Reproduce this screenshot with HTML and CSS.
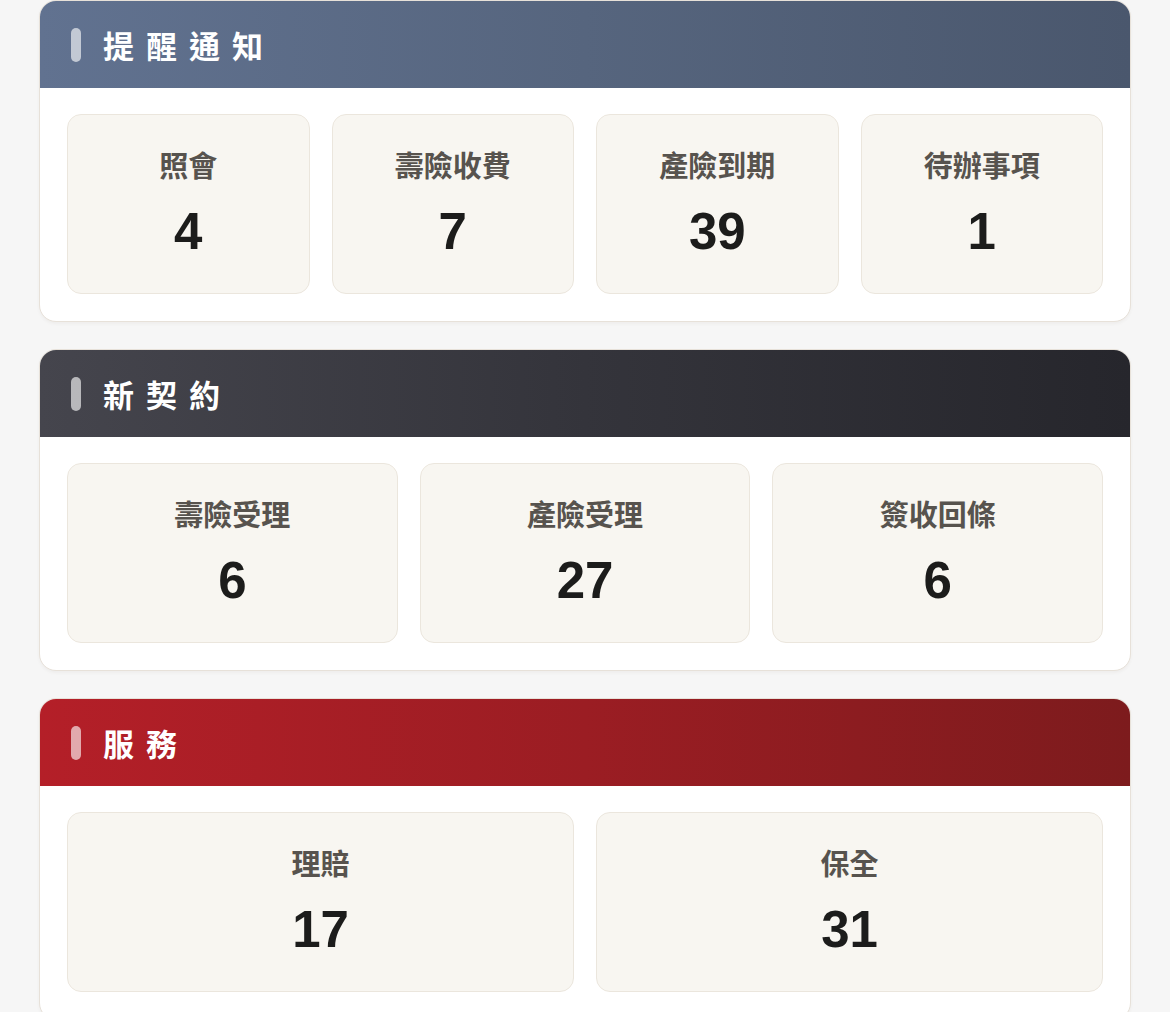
FILE: index.html
```html
<!DOCTYPE html>
<html lang="zh-Hant">
<head>
<meta charset="utf-8">
<title>Dashboard</title>
<link rel="stylesheet" href="styles.css">
</head>
<body>
<main class="page">
  <section class="card">
    <header class="card-head head-slate">
      <span class="pill"></span>
      <h2 class="card-title">提醒通知</h2>
    </header>
    <div class="tiles cols-4">
      <div class="tile"><div class="tile-label">照會</div><div class="tile-num">4</div></div>
      <div class="tile"><div class="tile-label">壽險收費</div><div class="tile-num">7</div></div>
      <div class="tile"><div class="tile-label">產險到期</div><div class="tile-num">39</div></div>
      <div class="tile"><div class="tile-label">待辦事項</div><div class="tile-num">1</div></div>
    </div>
  </section>

  <section class="card">
    <header class="card-head head-dark">
      <span class="pill"></span>
      <h2 class="card-title">新契約</h2>
    </header>
    <div class="tiles cols-3">
      <div class="tile"><div class="tile-label">壽險受理</div><div class="tile-num">6</div></div>
      <div class="tile"><div class="tile-label">產險受理</div><div class="tile-num">27</div></div>
      <div class="tile"><div class="tile-label">簽收回條</div><div class="tile-num">6</div></div>
    </div>
  </section>

  <section class="card">
    <header class="card-head head-red">
      <span class="pill"></span>
      <h2 class="card-title">服務</h2>
    </header>
    <div class="tiles cols-2">
      <div class="tile"><div class="tile-label">理賠</div><div class="tile-num">17</div></div>
      <div class="tile"><div class="tile-label">保全</div><div class="tile-num">31</div></div>
    </div>
  </section>
</main>
</body>
</html>
```

FILE: styles.css
```css
html, body {
  margin: 0;
  padding: 0;
}

body {
  background: #f6f6f6;
  font-family: "Noto Sans CJK TC", "Noto Sans", sans-serif;
}

.page {
  display: flex;
  flex-direction: column;
  gap: 27px;
  padding: 0 39px 40px 39px;
}

.card {
  background: #ffffff;
  border: 1.5px solid #e7e1d9;
  border-radius: 17px;
  overflow: hidden;
  box-shadow: 0 2px 3px rgba(120, 100, 80, 0.06);
}

.card-head {
  height: 87px;
  display: flex;
  align-items: center;
  padding-left: 31px;
  box-sizing: border-box;
}

.head-slate {
  background: linear-gradient(90deg, #617290 0%, #56657e 50%, #4a576d 100%);
}

.head-dark {
  background: linear-gradient(90deg, #45454d 0%, #34343b 50%, #26262c 100%);
}

.head-red {
  background: linear-gradient(90deg, #b41f28 0%, #9b1d23 50%, #7d1b1d 100%);
}

.pill {
  width: 10px;
  height: 34px;
  border-radius: 5px;
  background: rgba(255, 255, 255, 0.62);
  margin-right: 22px;
  flex: none;
}

.card-title {
  margin: 0;
  color: #ffffff;
  font-size: 31px;
  font-weight: 700;
  letter-spacing: 12px;
  line-height: 1;
}

.tiles {
  display: grid;
  gap: 22px;
  padding: 26px 27px 27px 27px;
}

.cols-4 { grid-template-columns: repeat(4, 1fr); }
.cols-3 { grid-template-columns: repeat(3, 1fr); }
.cols-2 { grid-template-columns: repeat(2, 1fr); }

.tile {
  height: 180px;
  box-sizing: border-box;
  background: #f8f6f1;
  border: 1.5px solid #ebe6dd;
  border-radius: 14px;
  display: flex;
  flex-direction: column;
  align-items: center;
  justify-content: center;
  padding-bottom: 2px;
}

.tile-label {
  color: #57534e;
  font-size: 29px;
  font-weight: 700;
  line-height: 36px;
}

.tile-num {
  color: #1c1c1b;
  font-family: "Liberation Sans", Arial, sans-serif;
  font-size: 51px;
  font-weight: 700;
  line-height: 56px;
  margin-top: 22px;
}
```
